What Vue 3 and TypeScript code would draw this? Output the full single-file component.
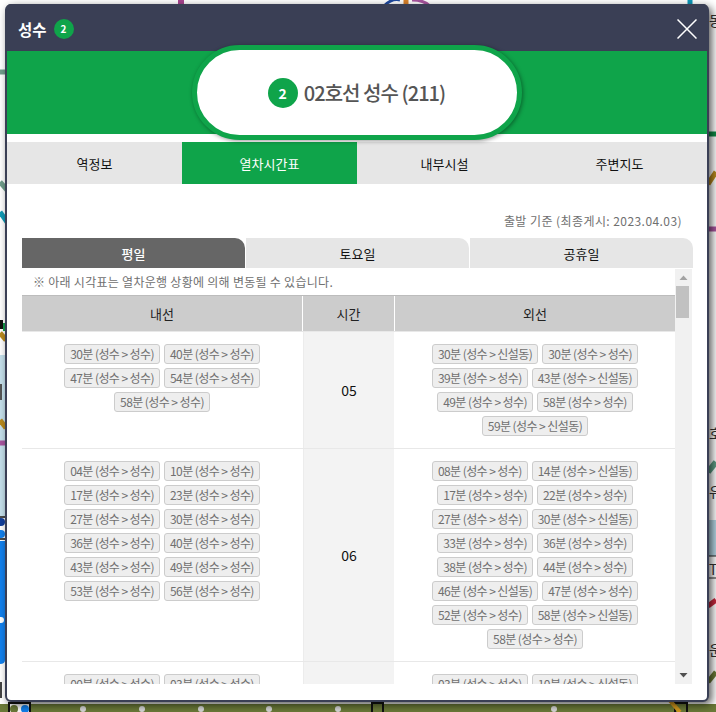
<script setup lang="ts">
interface Departure { minute: string; to: string }
interface HourRow { hour: string; inner: Departure[]; outer: Departure[] }

const S = '성수'
const D = '신설동'
const make = (list: string): Departure[] =>
  list.split(' ').map((item) => ({
    minute: item.slice(0, 2),
    to: item.endsWith('d') ? D : S,
  }))

const tabs: string[] = ['역정보', '열차시간표', '내부시설', '주변지도']
const days: string[] = ['평일', '토요일', '공휴일']
const rows: HourRow[] = [
  { hour: '05', inner: make('30 40 47 54 58'), outer: make('30d 30 39 43d 49 58 59d') },
  {
    hour: '06',
    inner: make('04 10 17 23 27 30 36 40 43 49 53 56'),
    outer: make('08 14d 17 22 27 30d 33 36 38 44 46d 47 52 58d 58'),
  },
  { hour: '07', inner: make('00 03 06 10 14 18 22 26'), outer: make('03 10d 13 18 23 28d 32 38') },
]
</script>

<template>
  <div class="desk">
    <svg class="map" width="716" height="712" viewBox="0 0 716 712">
      <path d="M181 0V5" stroke="#a8458f" stroke-width="6" />
      <path d="M384 6 Q392 -2 400 0" stroke="#1f4aa0" stroke-width="3" fill="none" />
      <path d="M406 0V6" stroke="#d9822b" stroke-width="5" />
      <path d="M412 0 Q424 0 430 6" stroke="#a8559f" stroke-width="3" fill="none" />
      <path d="M690 0V5" stroke="#0d97b8" stroke-width="5" />
      <path d="M0 72H6" stroke="#6f9d8b" stroke-width="5" />
      <path d="M0 182L7 190" stroke="#6f9d8b" stroke-width="5" />
      <path d="M0 212L7 222" stroke="#109ab5" stroke-width="5" />
      <path d="M0 355H6V480H0Z" fill="#c5e0ec" />
      <path d="M0 320H3V329H0Z" fill="#111" />
      <path d="M3 323H6V331H3Z" fill="#0f9d48" />
      <path d="M0 333L6 340" stroke="#b98a1e" stroke-width="5" />
      <path d="M0 420L6 428" stroke="#b98a1e" stroke-width="5" />
      <path d="M0 443H6" stroke="#a8559f" stroke-width="5" />
      <path d="M0 384H2V400H0Z" fill="#555" />
      <path d="M0 456H6V516H0Z" fill="#c5e0ec" />
      <path d="M0 516H6V541H0Z" fill="#fff" />
      <path d="M0 517H5M0 539H5" stroke="#111" stroke-width="1.5" />
      <circle cx="1" cy="522" r="4" fill="#123f9c" />
      <circle cx="1" cy="534" r="4" fill="#1281ee" />
      <path d="M0 541H5V660Q5 664 0 664Z" fill="#1281ee" />
      <circle cx="1" cy="620" r="3" fill="#fff" />
      <path d="M0 682H2V698H0Z" fill="#444" />
      <path d="M0 708H716" stroke="#6b7a38" stroke-width="8" />
      <g fill="#d9d9d9">
        <circle cx="83" cy="709" r="3" />
        <circle cx="142" cy="709" r="3" />
        <circle cx="201" cy="709" r="3" />
        <circle cx="269" cy="709" r="3" />
        <circle cx="338" cy="709" r="3" />
        <circle cx="554" cy="709" r="3" />
      </g>
      <rect x="9" y="703" width="21" height="12" fill="#fff" stroke="#111" stroke-width="2" />
      <circle cx="14" cy="709" r="4" fill="#6b7a38" />
      <circle cx="25" cy="709" r="4" fill="#1281ee" />
      <rect x="372" y="703" width="11" height="12" fill="#6b7a38" stroke="#111" stroke-width="2" />
      <rect x="675" y="703" width="12" height="12" fill="#6b7a38" stroke="#111" stroke-width="2" />
      <path d="M665 695L680 712" stroke="#d59a1e" stroke-width="4" />
      <path d="M708 134H716" stroke="#118a46" stroke-width="5" />
      <path d="M708 184L716 172" stroke="#b98a1e" stroke-width="5" />
      <path d="M708 229H716" stroke="#a8559f" stroke-width="5" />
      <path d="M708 472L716 462" stroke="#5e9c84" stroke-width="6" />
      <path d="M708 606L716 600" stroke="#c9283e" stroke-width="5" />
      <path d="M708 682L716 672" stroke="#6b7a38" stroke-width="5" />
      <path d="M709 520H716V556H709Z" fill="#b5d6e4" />
      <path d="M709 556H716M709 578H716" stroke="#222" stroke-width="1" />
      <g class="map-label">
        <text x="709" y="26">동</text>
        <text x="709" y="439">호</text>
        <text x="709" y="497">유</text>
        <text x="709" y="575">T</text>
        <text x="709" y="655">운</text>
      </g>
    </svg>

    <section class="modal">
      <header class="head">
        <div class="title">
          <strong>성수</strong>
          <span class="badge small">2</span>
        </div>
        <svg class="close" width="20" height="20" viewBox="0 0 20 20">
          <path d="M0.5 0.5L19.5 19.5M19.5 0.5L0.5 19.5" stroke="#fff" stroke-width="1.5" />
        </svg>
      </header>

      <div class="band">
        <div class="pill">
          <span class="badge big">2</span>
          <span class="pill-text">02호선 성수 (211)</span>
        </div>
      </div>

      <nav class="tabs">
        <div v-for="(tab, i) in tabs" :key="tab" class="tab" :class="{ on: i === 1 }">{{ tab }}</div>
      </nav>

      <div class="body">
        <p class="caption">출발 기준 (최종게시: 2023.04.03)</p>
        <div class="days">
          <div v-for="(day, i) in days" :key="day" class="day" :class="{ on: i === 0 }">{{ day }}</div>
        </div>

        <div class="scroller">
          <div class="content">
            <p class="note">※ 아래 시각표는 열차운행 상황에 의해 변동될 수 있습니다.</p>
            <div class="thead">
              <div>내선</div>
              <div>시간</div>
              <div>외선</div>
            </div>
            <div v-for="row in rows" :key="row.hour" class="trow">
              <div class="chips">
                <span v-for="(d, i) in row.inner" :key="i" class="chip">{{ d.minute }}분 (성수 &gt; {{ d.to }})</span>
              </div>
              <div class="hour">{{ row.hour }}</div>
              <div class="chips">
                <span v-for="(d, i) in row.outer" :key="i" class="chip">{{ d.minute }}분 (성수 &gt; {{ d.to }})</span>
              </div>
            </div>
          </div>
          <div class="bar">
            <svg width="17" height="17" viewBox="0 0 17 17"><path d="M4.5 11L8.5 6.5L12.5 11Z" fill="#a3a3a3" /></svg>
            <div class="track"><div class="thumb"></div></div>
            <svg width="17" height="17" viewBox="0 0 17 17"><path d="M4.5 6L8.5 10.5L12.5 6Z" fill="#505050" /></svg>
          </div>
        </div>
      </div>
    </section>
  </div>
</template>

<style>
html, body { margin: 0; background: #fff; }
</style>

<style scoped>
.desk {
  position: relative;
  width: 716px;
  height: 712px;
  overflow: hidden;
  background: #fff;
  font-family: "Noto Sans CJK KR", "Noto Sans", sans-serif;
}
.map { position: absolute; left: 0; top: 0; }
.map-label { font-size: 14px; fill: #333; font-family: "Noto Sans CJK KR", sans-serif; }
.modal {
  position: absolute;
  left: 5px;
  top: 4px;
  width: 704px;
  height: 698px;
  box-sizing: border-box;
  border: 2px solid #3a3f55;
  border-radius: 6px;
  background: #fff;
  box-shadow: 3px 3px 9px rgba(0, 0, 0, 0.65);
  display: flex;
  flex-direction: column;
}
.head {
  height: 45px;
  flex: none;
  background: #3a3f55;
  display: flex;
  align-items: center;
  justify-content: space-between;
  padding: 0 10px 0 11px;
  margin-top: -2px;
  border-radius: 4px 4px 0 0;
  padding-top: 2px;
}
.title { display: flex; align-items: center; gap: 7px; color: #fff; font-size: 15.5px; line-height: 20px; }
.title strong { font-weight: 700; }
.badge {
  display: flex;
  align-items: center;
  justify-content: center;
  border-radius: 50%;
  background: #0fa44a;
  color: #fff;
  font-weight: 700;
  flex: none;
}
.small { width: 20px; height: 20px; font-size: 10px; }
.big { width: 30px; height: 30px; font-size: 14px; }
.band {
  height: 83px;
  flex: none;
  background: #0fa44a;
  display: flex;
  align-items: center;
  justify-content: center;
}
.pill {
  position: relative;
  box-sizing: border-box;
  width: 330px;
  height: 95px;
  margin-left: -1px;
  border: 5px solid #0fa44a;
  border-radius: 48px;
  background: #fff;
  box-shadow: 1px 1px 4px rgba(0, 0, 0, 0.4);
  display: flex;
  align-items: center;
  justify-content: center;
  gap: 6px;
}
.pill-text { font-size: 20px; font-weight: 500; color: #555; letter-spacing: -0.95px; }
.tabs { display: flex; margin-top: 8px; flex: none; }
.tab {
  width: 175px;
  height: 42px;
  display: flex;
  align-items: center;
  justify-content: center;
  background: #e6e6e6;
  color: #111;
  font-size: 13px;
}
.tab.on { background: #0fa44a; color: #fff; }
.body { flex: 1; min-height: 0; padding: 0 0 0 15px; display: flex; flex-direction: column; }
.caption {
  margin: 0;
  height: 54px;
  width: 660px;
  box-sizing: border-box;
  padding-top: 27px;
  text-align: right;
  font-size: 12px;
  line-height: 20px;
  letter-spacing: 0.43px;
  color: #707070;
}
.days { display: flex; gap: 1px; width: 671px; flex: none; }
.day {
  flex: 1;
  height: 30px;
  display: flex;
  align-items: center;
  justify-content: center;
  background: #e6e6e6;
  color: #111;
  font-size: 13px;
  border-top-right-radius: 10px;
}
.day.on { background: #666; color: #fff; font-weight: 500; }
.scroller { display: flex; width: 671px; height: 415px; margin-top: 1px; overflow: hidden; flex: none; }
.content { width: 653px; flex: none; height: 415px; overflow: hidden; }
.note {
  margin: 0;
  height: 26px;
  padding-left: 11px;
  font-size: 12px;
  line-height: 25px;
  letter-spacing: 0.28px;
  color: #707070;
}
.thead {
  display: grid;
  grid-template-columns: 280px 91px 280px;
  column-gap: 1px;
  height: 35px;
  background: #ccc;
  border-top: 1px solid #bcbcbc;
  border-bottom: 1px solid #e8e8e8;
  box-sizing: content-box;
  font-size: 13px;
  color: #222;
}
.thead div {
  display: flex;
  align-items: center;
  justify-content: center;
  position: relative;
}
.thead div + div { box-shadow: -1px 0 0 #fff; }
.trow {
  display: grid;
  grid-template-columns: 281px 91px 281px;
  border-bottom: 1px solid #e8e8e8;
}
.chips {
  display: flex;
  flex-wrap: wrap;
  justify-content: center;
  align-content: flex-start;
  gap: 4px;
  padding: 12px 0;
}
.trow .chips:first-child { padding-right: 1px; }
.trow .chips:last-child { padding-left: 1px; }
.hour {
  background: #f3f3f3;
  border-left: 1px solid #ececec;
  display: flex;
  align-items: center;
  justify-content: center;
  font-size: 14px;
  color: #111;
}
.chip {
  box-sizing: border-box;
  height: 20px;
  padding: 0 5px;
  border: 1px solid #ccc;
  border-radius: 3px;
  background: #eee;
  color: #707070;
  font-size: 12px;
  line-height: 18px;
  letter-spacing: -0.58px;
  white-space: nowrap;
}
.bar { width: 17px; flex: none; background: #f1f1f1; display: flex; flex-direction: column; height: 415px; }
.bar svg { flex: none; display: block; }
.track { flex: 1; }
.thumb { width: 13px; height: 32px; margin-left: 1px; background: #c1c1c1; }
</style>
